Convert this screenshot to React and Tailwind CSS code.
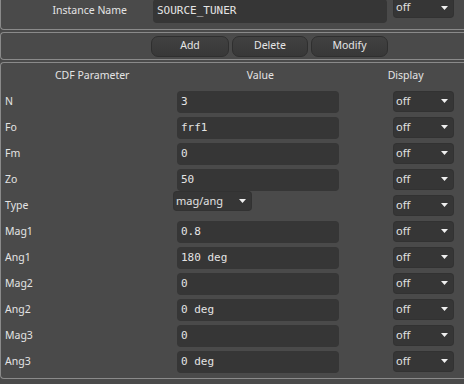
import React from 'react';

const rows = [
  { name: 'N', value: '3' },
  { name: 'Fo', value: 'frf1' },
  { name: 'Fm', value: '0' },
  { name: 'Zo', value: '50' },
  { name: 'Type', select: 'mag/ang' },
  { name: 'Mag1', value: '0.8' },
  { name: 'Ang1', value: '180 deg' },
  { name: 'Mag2', value: '0' },
  { name: 'Ang2', value: '0 deg' },
  { name: 'Mag3', value: '0' },
  { name: 'Ang3', value: '0 deg' },
];

function Arrow() {
  return (
    <svg width="7" height="4" viewBox="0 0 7 4" className="shrink-0">
      <polygon points="0,0 7,0 3.5,4" fill="#f0f0f0" />
    </svg>
  );
}

function Select({ label, className }) {
  return (
    <div
      className={
        'flex items-center justify-between rounded-[3px] bg-[#363636] shadow-[0_0_0_1px_#323232] pl-[2px] pr-[5px] text-[11px] text-[#e2e2e2] ' +
        className
      }
    >
      <span>{label}</span>
      <Arrow />
    </div>
  );
}

function Field({ value, className }) {
  return (
    <div
      className={
        'flex items-center rounded-[4px] bg-[#363636] pl-[4px] text-[11px] text-[#e4e4e4] whitespace-pre ' +
        className
      }
      style={{ fontFamily: '"DejaVu Sans Mono", monospace' }}
    >
      {value}
    </div>
  );
}

export default function App() {
  return (
    <div
      className="w-[464px] h-[384px] overflow-hidden bg-[#4a4a4a] text-[#e4e4e4]"
      style={{ fontFamily: '"Noto Sans", "Open Sans", sans-serif' }}
    >
      {/* instance name */}
      <div className="-mt-[4px] mr-[-10px] pt-[2px] pb-[5px] border-b border-l border-[#8a8a8a] rounded-bl-[4px]">
        <div className="flex items-center h-[26px]">
          <div className="w-[126px] text-right text-[10.5px]">Instance Name</div>
          <Field value="SOURCE_TUNER" className="ml-[26px] w-[234px] h-[24px]" />
          <Select label="off" className="ml-[7px] w-[59px] h-[19px] mb-[7px]" />
        </div>
      </div>

      {/* buttons */}
      <div className="mt-[2px] mr-[-10px] border-t border-b border-l border-[#8a8a8a] rounded-l-[4px]">
        <div className="flex items-center h-[26px] pl-[150px] gap-[3px]">
          {['Add', 'Delete', 'Modify'].map((b, i) => (
            <button
              key={b}
              className={
                'h-[21px] rounded-[7px] border border-[#2f2f2f] bg-gradient-to-b from-[#414141] to-[#383838] text-[10.5px] text-[#e6e6e6] ' +
                (i === 0 ? 'w-[78px]' : i === 1 ? 'w-[76px]' : 'w-[77px]')
              }
            >
              {b}
            </button>
          ))}
        </div>
      </div>

      {/* parameters */}
      <div className="mt-[2px] mr-[-10px] pb-[3px] border-t border-b border-l border-[#8a8a8a] rounded-l-[4px]">
        <div className="flex items-center h-[26px] text-[10.5px]">
          <div className="w-[192px] text-center">CDF Parameter</div>
          <div className="w-[162px] text-center">Value</div>
          <div className="w-[144px] text-center">Display</div>
        </div>
        {rows.map((r) => (
          <div key={r.name} className="flex items-center h-[26px]">
            <div className="w-[176px] pl-[4px] text-[10.5px]">{r.name}</div>
            {r.select ? (
              <div className="w-[162px] flex">
                <Select label={r.select} className="-ml-[3px] w-[77px] h-[18px] mb-[10px]" />
              </div>
            ) : (
              <Field value={r.value} className="w-[162px] h-[22px]" />
            )}
            <Select label="off" className="ml-[55px] w-[59px] h-[19px] mb-[2px]" />
          </div>
        ))}
      </div>
    </div>
  );
}
